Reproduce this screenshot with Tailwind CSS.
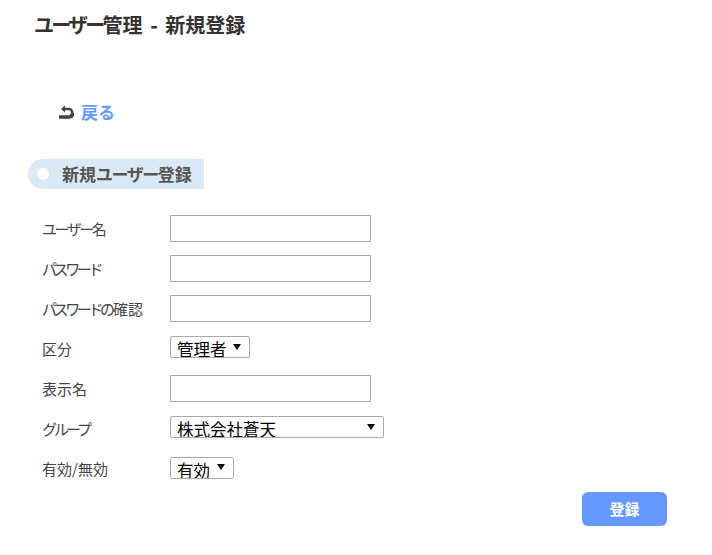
<!DOCTYPE html>
<html lang="ja">
<head>
  <meta charset="UTF-8">
  <title>ユーザー管理 - 新規登録</title>
  <script src="https://cdn.jsdelivr.net/npm/@tailwindcss/browser@4"></script>
</head>
<body class="bg-white text-[#333] font-['Noto_Sans_CJK_JP',sans-serif]">
  <div class="w-[712px] h-[555px] overflow-hidden relative">

    <!-- タイトル -->
    <h1 class="pl-[34px] pt-[10px] h-[99px] text-[20px] leading-[30px] font-bold text-[#333] [word-spacing:3px]"><span class="tracking-[-2.75px]">ユーザー</span>管理 <span class="font-black">-</span> 新規登録</h1>

    <!-- 戻る -->
    <div class="flex items-center h-[26px] pl-[59px] gap-[7px]">
      <svg class="w-[15px] h-[15px]" viewBox="0 0 15 15" fill="none">
        <path d="M6 0.5 L2 4 L6 7.5 Z" fill="#444"/>
        <path d="M4 4 H10 A3.5 3.5 0 0 1 11.5 10.5" stroke="#444" stroke-width="2.4"/>
        <path d="M0 12 H10 Q13.5 12 14 8" stroke="#444" stroke-width="3.4"/>
      </svg>
      <a href="#" class="text-[17px] leading-[26px] font-bold text-[#6699ff]">戻る</a>
    </div>

    <!-- 見出し -->
    <h2 class="mt-[34px] ml-[28px] w-[176px] h-[30px] flex items-center bg-[#dbe9f7] rounded-l-[15px] text-[17px] font-bold text-[#555]">
      <span class="ml-[9px] w-[12px] h-[12px] rounded-full bg-white"></span>
      <span class="ml-[13px] whitespace-nowrap">新規<span class="tracking-[-1.5px]">ユーザー</span>登録</span>
    </h2>

    <!-- フォーム -->
    <form class="mt-[20px] pl-[42px] text-[15px] text-[#444]">
      <div class="flex h-[40px] pt-[6px]">
        <label class="w-[128px] leading-[27px]"><span class="tracking-[-2.5px]">ユーザー</span>名</label>
        <input type="text" class="w-[201px] h-[27px] border border-[#a9a9a9] bg-white">
      </div>
      <div class="flex h-[40px] pt-[6px]">
        <label class="w-[128px] leading-[27px]"><span class="tracking-[-3.4px]">パスワード</span></label>
        <input type="password" class="w-[201px] h-[27px] border border-[#a9a9a9] bg-white">
      </div>
      <div class="flex h-[40px] pt-[6px]">
        <label class="w-[128px] leading-[27px] whitespace-nowrap"><span class="tracking-[-3.4px]">パスワード</span><span class="tracking-[-2px]">の</span>確認</label>
        <input type="password" class="w-[201px] h-[27px] border border-[#a9a9a9] bg-white">
      </div>
      <div class="flex h-[40px] pt-[6px]">
        <label class="w-[128px] leading-[27px]">区分</label>
        <div class="relative mt-px w-[80px] h-[22px]">
          <select class="appearance-none w-full h-full pl-[6px] pt-[2px] border border-[#a9a9a9] rounded-[2px] bg-white text-[16.5px] leading-[20px] text-black">
            <option>管理者</option>
          </select>
          <span class="absolute right-[9px] top-[8px] border-x-[4px] border-t-[6px] border-x-transparent border-t-black"></span>
        </div>
      </div>
      <div class="flex h-[40px] pt-[6px]">
        <label class="w-[128px] leading-[27px]">表示名</label>
        <input type="text" class="w-[201px] h-[27px] border border-[#a9a9a9] bg-white">
      </div>
      <div class="flex h-[40px] pt-[6px]">
        <label class="w-[128px] leading-[27px]"><span class="tracking-[-3px]">グループ</span></label>
        <div class="relative mt-px w-[214px] h-[22px]">
          <select class="appearance-none w-full h-full pl-[6px] pt-[2px] border border-[#a9a9a9] rounded-[2px] bg-white text-[16.5px] leading-[20px] text-black">
            <option>株式会社蒼天</option>
          </select>
          <span class="absolute right-[9px] top-[8px] border-x-[4px] border-t-[6px] border-x-transparent border-t-black"></span>
        </div>
      </div>
      <div class="flex h-[40px] pt-[6px]">
        <label class="w-[128px] leading-[27px]">有効/無効</label>
        <div class="relative mt-[2px] w-[64px] h-[22px]">
          <select class="appearance-none w-full h-full pl-[6px] pt-[2px] border border-[#a9a9a9] rounded-[2px] bg-white text-[16.5px] leading-[20px] text-black">
            <option>有効</option>
          </select>
          <span class="absolute right-[9px] top-[7px] border-x-[4px] border-t-[6px] border-x-transparent border-t-black"></span>
        </div>
      </div>
      <div class="flex justify-end pr-[45px] mt-[3px]">
        <button type="button" class="w-[85px] h-[34px] rounded-[6px] bg-[#6699ff] text-white text-[15px] font-bold">登録</button>
      </div>
    </form>
  </div>
</body>
</html>
